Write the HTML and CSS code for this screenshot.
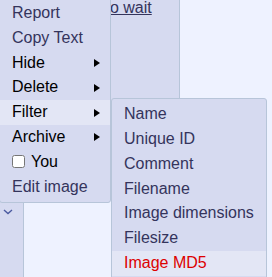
FILE: index.html
```html
<!DOCTYPE html>
<html>
<head>
<meta charset="utf-8">
<link rel="stylesheet" href="styles.css">
</head>
<body>
<div class="page">
  <div class="side">
    <svg class="chev" width="10" height="6" viewBox="0 0 10 6"><polyline points="1,1 5,4.5 9,1" fill="none" stroke="#4b5aa0" stroke-width="1.4"/></svg>
  </div>
  <div class="main">
    <div class="post">
      <a class="postlink" href="#">to wait</a>
    </div>
  </div>
</div>
<div class="menu">
  <a class="entry link" href="#">Report</a>
  <a class="entry link" href="#">Copy Text</a>
  <div class="entry has-sub">Hide</div>
  <div class="entry has-sub">Delete</div>
  <div class="entry has-sub focused">Filter
    <div class="menu submenu">
      <a class="entry link" href="#">Name</a>
      <a class="entry link" href="#">Unique ID</a>
      <a class="entry link" href="#">Comment</a>
      <a class="entry link" href="#">Filename</a>
      <a class="entry link" href="#">Image dimensions</a>
      <a class="entry link" href="#">Filesize</a>
      <a class="entry link focused hover" href="#">Image MD5</a>
    </div>
  </div>
  <div class="entry has-sub">Archive</div>
  <label class="entry"><input type="checkbox" class="cb">You</label>
  <a class="entry link" href="#">Edit image</a>
</div>
</body>
</html>
```

FILE: styles.css
```css
html, body {
  margin: 0;
  padding: 0;
}
body {
  background: #EEF2FF;
  font-family: Arial, "Liberation Sans", sans-serif;
  font-size: 16px;
  color: #000;
  overflow: hidden;
  width: 272px;
  height: 277px;
  position: relative;
}
.page {
  display: flex;
  height: 277px;
}
.side {
  width: 23px;
  flex: none;
  background: #D6DAF0;
  border-right: 1px solid #B7C5D9;
  padding-top: 209px;
  box-sizing: content-box;
}
.chev {
  display: block;
  margin-left: 3px;
}
.main {
  flex: 1;
}
.post {
  width: 156px;
  height: 170px;
  background: #D6DAF0;
  border-right: 1px solid #B7C5D9;
  border-bottom: 1px solid #B7C5D9;
  padding-left: 81.5px;
  box-sizing: border-box;
  margin-top: -1px;
  line-height: 18.4px;
}
.postlink {
  color: #34345C;
  text-decoration: underline;
}
.menu {
  position: absolute;
  left: -1px;
  top: -3px;
  width: 110px;
  background: #D6DAF0;
  border: 1px solid #B7C5D9;
  border-radius: 3px;
  padding: 3px 0;
  display: flex;
  flex-direction: column;
  z-index: 2;
}
.entry {
  display: block;
  position: relative;
  padding: 3px 12px;
  line-height: 18.8px;
  white-space: nowrap;
  text-decoration: none;
  color: #000;
}
.entry.link {
  color: #34345C;
}
.entry.focused {
  background: rgba(255, 255, 255, 0.33);
}
.entry.hover {
  color: #DD0000;
}
.has-sub::after {
  content: "";
  position: absolute;
  right: 10px;
  top: 50%;
  margin-top: -4px;
  border-left: 6px solid #000;
  border-top: 4px solid transparent;
  border-bottom: 4px solid transparent;
}
.submenu {
  left: 111px;
  top: -2px;
  width: max-content;
  padding: 3px 0;
}
.submenu .entry {
  padding-right: 12px;
}
.cb {
  width: 13px;
  height: 13px;
  margin: 0 6px 0 0;
  vertical-align: -1px;
}
```
